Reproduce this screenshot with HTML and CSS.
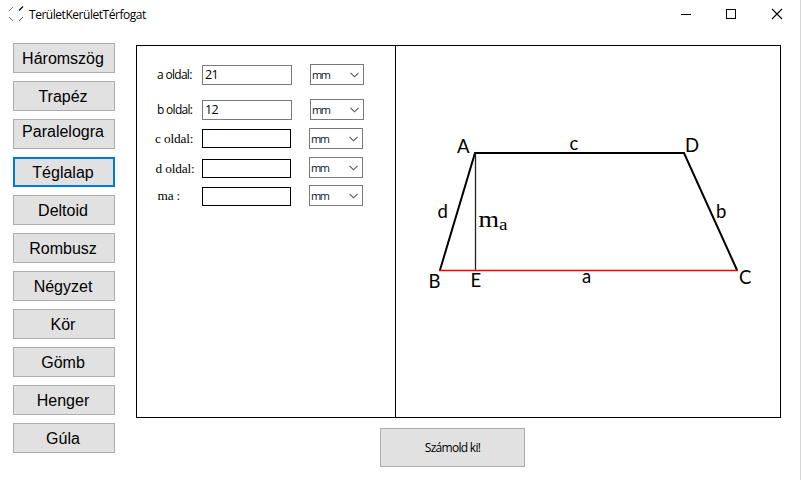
FILE: index.html
```html
<!DOCTYPE html>
<html lang="hu">
<head>
<meta charset="utf-8">
<title>TerületKerületTérfogat</title>
<link rel="stylesheet" href="styles.css">
</head>
<body>
<div class="window">
  <header class="titlebar">
    <svg class="app-icon" width="16" height="16" viewBox="0 0 16 16" fill="none"><path d="M0 5L4 1M0 11L4 15" stroke="#777"/><path d="M10 4.500L14 .5" stroke="#000" stroke-width="1.200"/><path d="M10 15L14 11" stroke="#555"/></svg>
    <span class="title">TerületKerületTérfogat</span>
    <svg class="controls" width="104" height="12" viewBox="0 0 104 12" fill="none" stroke="#000" shape-rendering="crispEdges"><path d="M0 6.500H10"/><rect x="45.500" y="1.500" width="9" height="9"/><path d="M91 1L101 11M101 1L91 11" stroke-width="1.100" shape-rendering="auto"/></svg>
  </header>
  <main class="content">
    <nav class="shapes">
      <button class="shape">Háromszög</button>
      <button class="shape">Trapéz</button>
      <button class="shape raised">Paralelogra</button>
      <button class="shape active">Téglalap</button>
      <button class="shape">Deltoid</button>
      <button class="shape">Rombusz</button>
      <button class="shape">Négyzet</button>
      <button class="shape">Kör</button>
      <button class="shape">Gömb</button>
      <button class="shape">Henger</button>
      <button class="shape">Gúla</button>
    </nav>
    <section class="work">
      <div class="panels">
        <div class="form">
          <div class="row"><span class="label label-a">a oldal:</span><span class="field">21</span><span class="unit">mm<svg class="chevron" width="9" height="6" viewBox="0 0 9 6"><path d="M.5 .8L4.500 4.800L8.500 .8"/></svg></span></div>
          <div class="row"><span class="label label-b">b oldal:</span><span class="field">12</span><span class="unit">mm<svg class="chevron" width="9" height="6" viewBox="0 0 9 6"><path d="M.5 .8L4.500 4.800L8.500 .8"/></svg></span></div>
          <div class="row plain"><span class="label">c oldal:</span><span class="field"></span><span class="unit">mm<svg class="chevron" width="9" height="6" viewBox="0 0 9 6"><path d="M.5 .8L4.500 4.800L8.500 .8"/></svg></span></div>
          <div class="row plain low"><span class="label label-d">d oldal:</span><span class="field"></span><span class="unit">mm<svg class="chevron" width="9" height="6" viewBox="0 0 9 6"><path d="M.5 .8L4.500 4.800L8.500 .8"/></svg></span></div>
          <div class="row plain low"><span class="label label-ma">ma :</span><span class="field"></span><span class="unit">mm<svg class="chevron" width="9" height="6" viewBox="0 0 9 6"><path d="M.5 .8L4.500 4.800L8.500 .8"/></svg></span></div>
        </div>
        <svg class="figure" width="384" height="371" viewBox="396 46 384 371">
          <path class="edge" d="M440 270L475 153H684L737 270"/>
          <path class="height" d="M475.500 153V270"/>
          <path class="base" d="M439 270.500H738"/>
          <g class="names">
            <text x="457" y="153" textLength="12">A</text>
            <text x="685" y="152" textLength="13">D</text>
            <text x="428.500" y="288" textLength="11">B</text>
            <text x="470.500" y="287" textLength="9.500">E</text>
            <text x="739" y="283.500" textLength="12">C</text>
            <text x="569.500" y="150">c</text>
            <text x="437.500" y="218">d</text>
            <text x="716" y="218">b</text>
            <text x="582" y="283">a</text>
          </g>
          <text class="m" x="478.500" y="227" textLength="20.500" lengthAdjust="spacingAndGlyphs">m</text>
          <text class="sub" x="499" y="230" textLength="8.500" lengthAdjust="spacingAndGlyphs">a</text>
        </svg>
      </div>
      <button class="calculate">Számold ki!</button>
    </section>
  </main>
</div>
</body>
</html>
```
FILE: styles.css
```css
* { box-sizing: border-box; }
body { margin: 0; background: #fff; color: #000; font-family: "Open Sans", "Noto Sans", sans-serif; }
button { padding: 0; border: 1px solid #adadad; background: #e1e1e1; color: #000; }
.window { width: 801px; height: 480px; border-right: 1px solid #d6d6d6; overflow: hidden; }
.titlebar { height: 43px; display: flex; align-items: flex-start; padding: 6px 15px 0 9px; }
.title { margin: 1px 0 0 4px; font-size: 12px; line-height: 16px; letter-spacing: -.46px; }
.controls { margin: 2px 0 0 auto; }
.content { display: flex; padding-left: 13px; }
.shapes { display: flex; flex-direction: column; gap: 8px; width: 102px; }
.shape { height: 30px; font: 16px/28px "Liberation Sans", Arial, sans-serif; padding: 1px 2px 0 0; white-space: nowrap; }
.raised { padding: 0 2px 4px 0; line-height: 24px; }
.active { border: 2px solid #0078d7; padding-top: 2px; line-height: 24px; }
.work { margin: 2px 0 0 21px; width: 645px; }
.panels { height: 373px; display: flex; border: 1px solid #000; }
.form { width: 259px; border-right: 1px solid #000; padding: 18px 0 0 18px; display: grid; grid-template-rows: 35px 29px 29px 28px 21px; align-content: start; }
.row { display: flex; align-items: flex-start; font-size: 12px; letter-spacing: -.7px; }
.label { width: 47px; line-height: 20px; padding: 1px 0 0 2px; white-space: nowrap; }
.field { width: 90px; height: 20px; margin-top: 1px; border: 1px solid #7a7a7a; padding-left: 2px; line-height: 18px; font-size: 12.500px; }
.unit { width: 54px; height: 21px; margin-left: 18px; border: 1px solid #7a7a7a; padding: 0 4px 0 1px; display: flex; align-items: center; justify-content: space-between; line-height: 19px; color: #101030; font-size: 11px; letter-spacing: -1.500px; }
.chevron { fill: none; stroke: #555; stroke-width: 1.100; }
.plain .label { font: 13.300px/20px "Liberation Serif", "Times New Roman", serif; letter-spacing: -.15px; padding: 1px 0 0; }
.plain .field { width: 89px; height: 19px; border-color: #000; }
.low .field { margin-top: 2px; }
.low .label-d { padding: 2px 0 0 .5px; }
.low .label-ma { padding-left: 2.500px; }
.figure { display: block; }
.edge { fill: none; stroke: #000; stroke-width: 2; }
.height { stroke: #222; stroke-width: 1.300; }
.base { stroke: #f00000; stroke-width: 1.300; }
.names { font: 18.500px Lato, "Open Sans", sans-serif; }
.m { font: 23px "Liberation Serif", serif; }
.sub { font: 16px "Liberation Serif", serif; }
.calculate { display: block; width: 145px; height: 39px; margin: 10px 0 0 244px; font: 12px/37px "Open Sans", sans-serif; letter-spacing: -.7px; }
```
